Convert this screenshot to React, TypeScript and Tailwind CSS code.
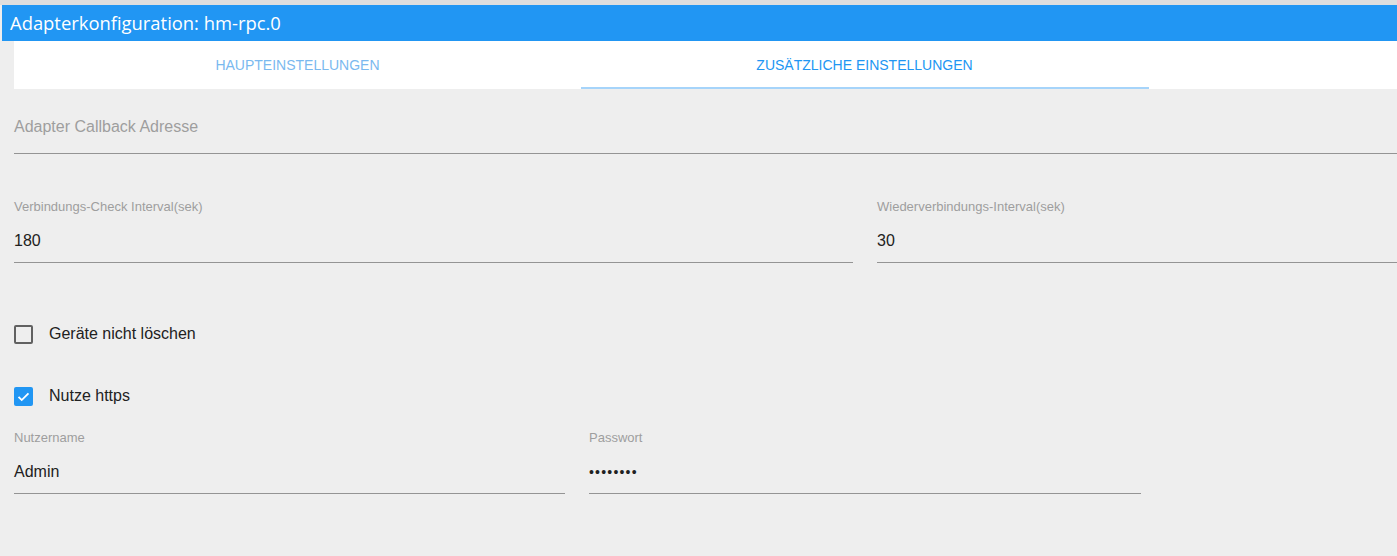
import { useState } from 'react';

function Field({
  label,
  value,
  secret = false,
  className = '',
}: {
  label: string;
  value: string;
  secret?: boolean;
  className?: string;
}) {
  return (
    <div className={`flex flex-col ${className}`}>
      <label className="text-[13px] leading-[14px] text-[#9e9e9e]">{label}</label>
      <div
        className={`mt-[18px] h-[31px] leading-[18px] text-[#212121] border-b border-[#949494] ${
          secret ? 'text-[14px] tracking-[1.2px]' : 'text-[16px]'
        }`}
      >
        {value}
      </div>
    </div>
  );
}

function Checkbox({ checked, label }: { checked: boolean; label: string }) {
  return (
    <div className="flex items-center h-[20px]">
      {checked ? (
        <span className="w-[19px] h-[19px] rounded-[2px] bg-[#2196f3] flex items-center justify-center">
          <svg viewBox="0 0 24 24" className="w-[17px] h-[17px]" fill="none" stroke="white" strokeWidth={2.6}>
            <path d="M5 12.5l4.5 4.5L19 7.5" />
          </svg>
        </span>
      ) : (
        <span className="w-[19px] h-[19px] rounded-[2px] border-2 border-[#616161]" />
      )}
      <span className="ml-[16px] text-[16px] text-[#212121]">{label}</span>
    </div>
  );
}

export default function App() {
  const [tab] = useState(1);
  const tabs = ['Haupteinstellungen', 'Zusätzliche Einstellungen'];

  return (
    <div
      className="w-[1397px] h-[556px] bg-[#eeeeee] overflow-hidden"
      style={{ fontFamily: '"Liberation Sans", Arial, sans-serif' }}
    >
      <div className="h-[5px] bg-[#dedede]" />
      <header className="ml-[2px] h-[36px] bg-[#2196f3] flex items-center px-[8px]">
        <h1
          className="text-[18.4px] text-white"
          style={{ fontFamily: '"Open Sans", "Noto Sans", sans-serif' }}
        >
          Adapterkonfiguration: hm-rpc.0
        </h1>
      </header>

      <nav className="ml-[14px] h-[48px] bg-white flex">
        {tabs.map((t, i) => (
          <div
            key={t}
            className={`w-[567px] flex items-center justify-center uppercase text-[14px] relative ${
              i === tab ? 'text-[#2196f3]' : 'text-[#7ab9ef]'
            }`}
          >
            {t}
            {i === tab && <span className="absolute left-0 -right-[1px] bottom-0 h-[2px] bg-[#a6d4fa]" />}
          </div>
        ))}
      </nav>

      <main className="px-[14px]">
        <div className="mt-[26px] h-[39px] border-b border-[#949494] -mr-[14px] text-[16px] text-[#9e9e9e]">
          Adapter Callback Adresse
        </div>

        <div className="mt-[46px] flex gap-[24px] -mr-[14px]">
          <Field className="w-[839px]" label="Verbindungs-Check Interval(sek)" value="180" />
          <Field className="flex-1" label="Wiederverbindungs-Interval(sek)" value="30" />
        </div>

        <div className="mt-[61px]">
          <Checkbox checked={false} label="Geräte nicht löschen" />
        </div>
        <div className="mt-[42px]">
          <Checkbox checked label="Nutze https" />
        </div>

        <div className="mt-[25px] flex gap-[24px]">
          <Field className="w-[551px]" label="Nutzername" value="Admin" />
          <Field className="w-[552px]" label="Passwort" value="••••••••" secret />
        </div>
      </main>
    </div>
  );
}
